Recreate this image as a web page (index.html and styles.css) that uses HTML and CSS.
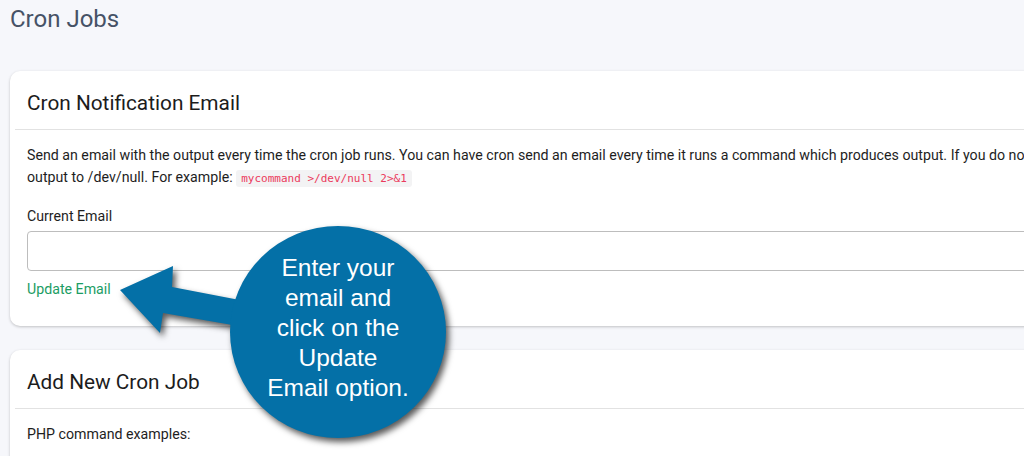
FILE: index.html
```html
<!DOCTYPE html>
<html lang="en">
<head>
    <meta charset="UTF-8">
    <meta name="viewport" content="width=device-width, initial-scale=1.0">
    <title>Cron Jobs</title>
    <link rel="stylesheet" href="styles.css">
</head>
<body>
    <div class="page">
        <h1 class="page-title">Cron Jobs</h1>

        <!-- Notification email -->
        <div class="card">
            <div class="card-header">
                <h2>Cron Notification Email</h2>
            </div>
            <div class="card-body">
                <p class="intro">Send an email with the output every time the cron job runs. You can have cron send an email every time it runs a command which produces output. If you do not want an email to be sent for an individual cron job you can redirect the command's<br>output to /dev/null. For example: <code>mycommand &gt;/dev/null 2&gt;&amp;1</code></p>
                <label class="field-label" for="currentEmail">Current Email</label>
                <input class="field-input" id="currentEmail" type="text">
                <a class="link-btn" href="#">Update Email</a>
            </div>
        </div>

        <!-- New cron job -->
        <div class="card">
            <div class="card-header">
                <h2>Add New Cron Job</h2>
            </div>
            <div class="card-body">
                <p>PHP command examples:</p>
            </div>
        </div>
    </div>

    <!-- annotation overlay -->
    <svg class="callout-shape" width="1024" height="456" viewBox="0 0 1024 456">
        <polygon points="120,290 173,266 172,287 250,302 250,328 163,313 160,333" fill="#0470a7"/>
        <ellipse cx="338" cy="332" rx="108" ry="106" fill="#0470a7"/>
    </svg>
    <div class="callout-text">Enter your<br>email and<br>click on the<br>Update<br>Email option.</div>
</body>
</html>
```

FILE: styles.css
```css
* {
    margin: 0;
    padding: 0;
    box-sizing: border-box;
}

body {
    overflow: hidden;
    height: 456px;
    background-color: #f6f7fb;
    color: #1e1e1e;
    font-family: Roboto, "Liberation Sans", sans-serif;
    font-size: 14.2px;
}

.page {
    width: 2400px;
    padding: 0 10px;
}

.page-title {
    margin-top: 5px;
    font-size: 24px;
    line-height: 28px;
    font-weight: 400;
    color: #465266;
}

.card {
    margin-top: 38px;
    background-color: #ffffff;
    border-radius: 10px;
    box-shadow: 0 1px 3px rgba(0, 0, 0, 0.22);
}

.card + .card {
    margin-top: 24px;
}

.card-header {
    height: 59px;
    margin: 0 5px;
    padding: 20px 12px 0;
    border-bottom: 1px solid #e2e2e2;
}

.card-header h2 {
    font-size: 20.8px;
    line-height: 24px;
    font-weight: 400;
    color: #1c1c1c;
}

.card-body {
    padding: 14px 17px 26px;
    line-height: 22px;
}

.intro {
    margin-bottom: 16px;
}

code {
    padding: 2px 5px;
    border-radius: 3px;
    background-color: #f3f3f4;
    color: #eb3a5c;
    font-family: "DejaVu Sans Mono", monospace;
    font-size: 11px;
}

.field-label {
    display: block;
    line-height: 20px;
    margin-bottom: 5px;
}

.field-input {
    display: block;
    width: 100%;
    height: 40px;
    border: 1px solid #bdbdbd;
    border-radius: 4px;
    background: #fff;
}

.link-btn {
    display: inline-block;
    margin-top: 8px;
    line-height: 20px;
    color: #1c9d64;
    text-decoration: none;
}

.callout-shape {
    position: absolute;
    left: 0;
    top: 0;
    pointer-events: none;
    filter: drop-shadow(3px 4px 3px rgba(0, 0, 0, 0.65));
}

.callout-text {
    position: absolute;
    left: 238px;
    top: 253px;
    width: 200px;
    text-align: center;
    color: #ffffff;
    font-family: "Liberation Sans", Arial, sans-serif;
    font-size: 24.5px;
    line-height: 30px;
}
```
